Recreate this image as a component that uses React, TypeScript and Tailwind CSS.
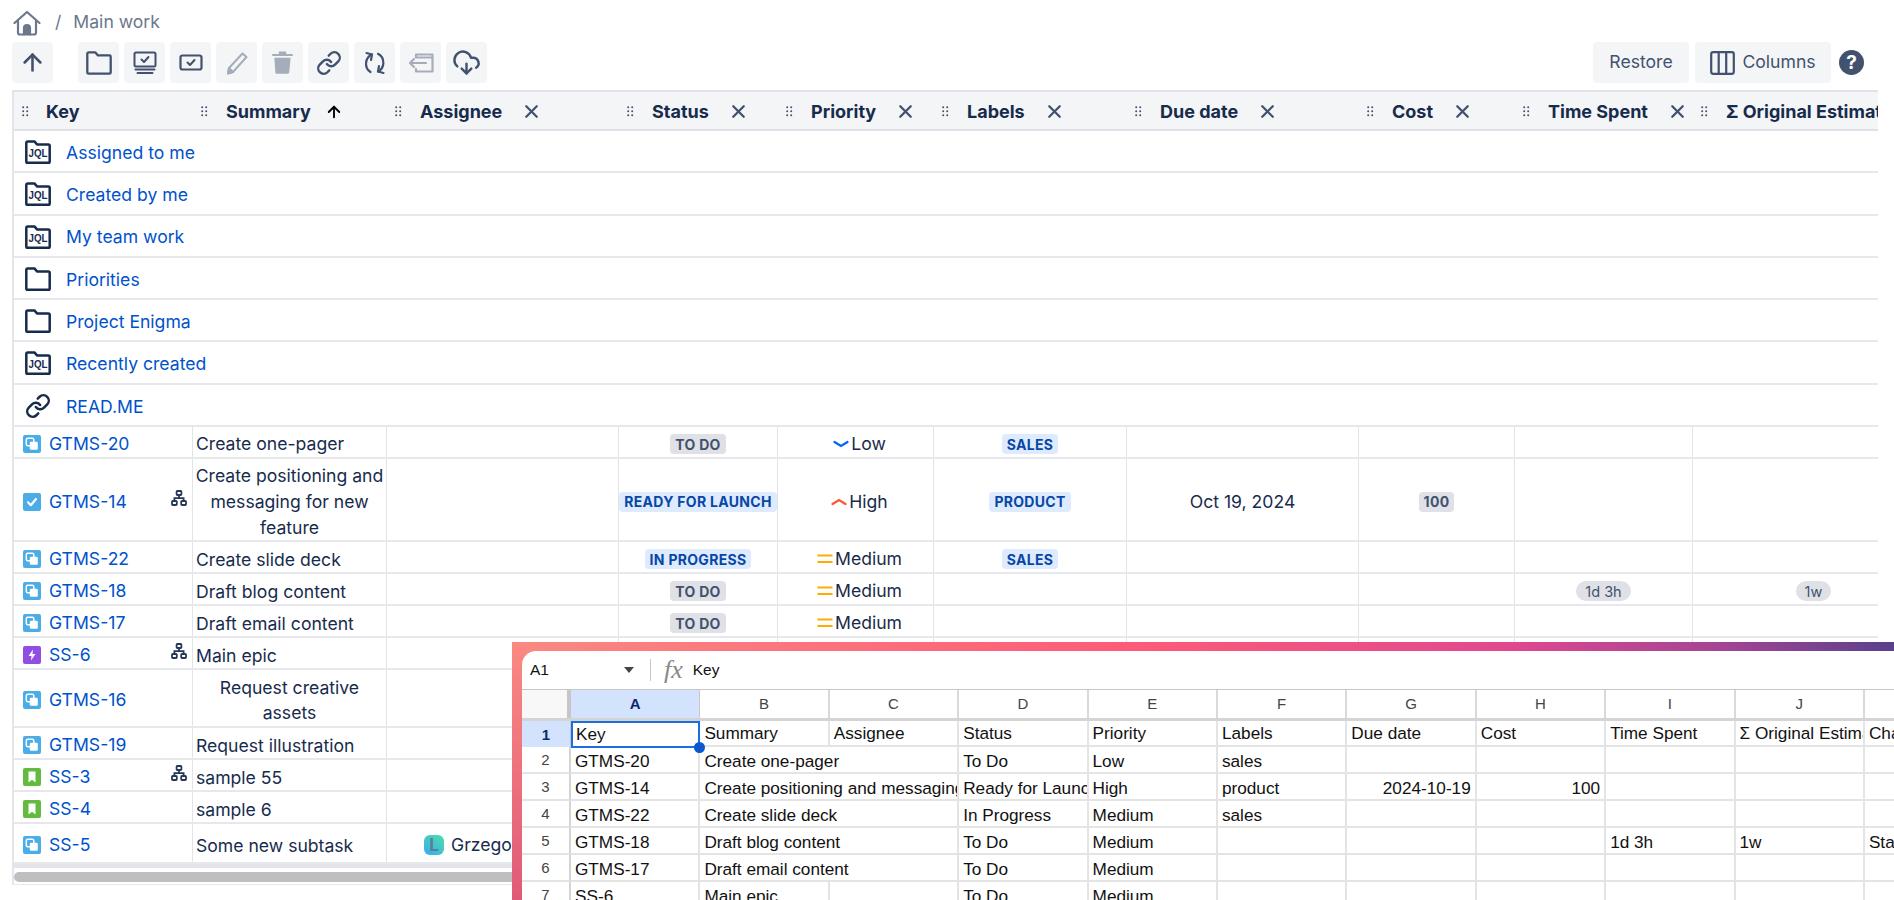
import React from "react";
import { ArrowUp, Link, CloudDownload, X } from "lucide-react";

const cols = [
  "w-[179px]", "w-[194px]", "w-[232px]", "w-[159px]", "w-[156px]",
  "w-[193px]", "w-[232px]", "w-[156px]", "w-[178px]", "w-[242px]",
];

function Btn({ children }: { children: React.ReactNode }) {
  return (
    <div className="w-[41px] h-[41px] shrink-0 rounded-[4px] bg-[#f4f5f7] flex items-center justify-center">{children}</div>
  );
}

function Handle() {
  return (
    <svg width="7" height="11" viewBox="0 0 7 11" className="shrink-0" fill="#42526e">
      <circle cx="1.2" cy="1.2" r="1" /><circle cx="5.2" cy="1.2" r="1" />
      <circle cx="1.2" cy="5.2" r="1" /><circle cx="5.2" cy="5.2" r="1" />
      <circle cx="1.2" cy="9.2" r="1" /><circle cx="5.2" cy="9.2" r="1" />
    </svg>
  );
}

function Head({ w, label, close, sort, first }: { w: string; label: string; close?: boolean; sort?: boolean; first?: boolean }) {
  return (
    <div className={`${w} shrink-0 h-full flex items-center pl-[8px] pt-[2px] whitespace-nowrap`}>
      <Handle />
      <span className={`${first ? "ml-[17px]" : "ml-[18px]"} font-bold text-[18px] text-[#172b4d]`}>{label}</span>
      {close && <X size={21} strokeWidth={2.600} className="ml-[19px] -mr-[4px] text-[#42526e] shrink-0" />}
      {sort && <ArrowUp size={18} strokeWidth={2.500} className="ml-[14px] text-black shrink-0" />}
    </div>
  );
}

const folderPath = "M1.300 21.400V2.700a1.300 1.300 0 0 1 1.300-1.300h6.800l2.600 3h11.400a1.300 1.300 0 0 1 1.300 1.300v15.700a1.300 1.300 0 0 1-1.300 1.300H2.600a1.300 1.300 0 0 1-1.300-1.300z";

function JqlIcon() {
  return (
    <svg width="26" height="24" viewBox="0 0 26 24" className="shrink-0">
      <path d={folderPath} fill="none" stroke="#172b4d" strokeWidth="2.500" strokeLinejoin="round" />
      <text x="13" y="17" textAnchor="middle" fontSize="11" fontWeight="700" fontFamily="'Liberation Sans', sans-serif" fill="#172b4d" textLength="19" lengthAdjust="spacingAndGlyphs">JQL</text>
    </svg>
  );
}
function FolderIcon() {
  return (
    <svg width="26" height="24" viewBox="0 0 26 24" className="shrink-0">
      <path d={folderPath} fill="none" stroke="#172b4d" strokeWidth="2.500" strokeLinejoin="round" />
    </svg>
  );
}

function BoxIcon({ kind }: { kind: "sub" | "task" | "epic" | "story" }) {
  const bg = { sub: "bg-[#4bade8]", task: "bg-[#4bade8]", epic: "bg-[#904ee2]", story: "bg-[#63ba3c]" }[kind];
  return (
    <div className={`w-[18px] h-[18px] rounded-[2px] ${bg} shrink-0 flex items-center justify-center`}>
      <svg width="14" height="14" viewBox="0 0 14 14">
        {kind === "sub" && (
          <>
            <rect x="1.300" y="1.300" width="7.500" height="7.500" rx="1.500" fill="none" stroke="#fff" strokeWidth="1.500" />
            <rect x="4.800" y="4.800" width="8" height="8" rx="1.300" fill="#fff" />
          </>
        )}
        {kind === "task" && <path d="M3 7.300l2.800 2.900L11 4" fill="none" stroke="#fff" strokeWidth="2.200" strokeLinecap="round" strokeLinejoin="round" />}
        {kind === "epic" && <path d="M8 1.500L3.500 8h3L6 12.500 10.500 6h-3z" fill="#fff" />}
        {kind === "story" && <path d="M3.500 1.500h7v11L7 9.800 3.500 12.500z" fill="#fff" />}
      </svg>
    </div>
  );
}

function Tree() {
  return (
    <svg width="16" height="16" viewBox="0 0 16 16" className="shrink-0 absolute right-[5px] top-1/2 -translate-y-[10px]" fill="none" stroke="#253858" strokeWidth="1.800">
      <rect x="5.600" y="1" width="4.800" height="4" rx=".8" />
      <rect x="1" y="11" width="4.800" height="4" rx=".8" />
      <rect x="10.200" y="11" width="4.800" height="4" rx=".8" />
      <path d="M8 5v3.200M3.400 11V8.200h9.200V11" />
    </svg>
  );
}

function Loz({ t, blue }: { t: string; blue?: boolean }) {
  return (
    <span className={`inline-flex items-center h-[20px] px-[5px] rounded-[4px] text-[14px] font-bold tracking-[0.3px] whitespace-nowrap ${blue ? "bg-[#deebff] text-[#0747a6]" : "bg-[#dfe1e6] text-[#42526e]"}`}>
      {t}
    </span>
  );
}

function Prio({ p }: { p: string }) {
  return (
    <div className="flex items-center justify-center pl-[8px] gap-[2px]">
      <svg width="16" height="14" viewBox="0 0 16 14" className="shrink-0">
        {p === "Low" && <path d="M1.500 5l6.500 4 6.500-4" fill="none" stroke="#0065ff" strokeWidth="2.200" strokeLinecap="round" />}
        {p === "High" && <path d="M1.500 9l6.500-4 6.500 4" fill="none" stroke="#ff5630" strokeWidth="2.200" strokeLinecap="round" />}
        {p === "Medium" && <path d="M0.500 3.500h15M0.500 10h15" fill="none" stroke="#ffab00" strokeWidth="2.200" />}
      </svg>
      <span>{p}</span>
    </div>
  );
}

type RowData = {
  h: string; kind: "sub" | "task" | "epic" | "story"; k: string; s: string; center?: boolean; tree?: boolean;
  status?: [string, boolean]; prio?: string; label?: string; due?: string; cost?: string; spent?: string; est?: string; who?: string;
};

const rows: RowData[] = [
  { h: "h-[32.300px]", kind: "sub", k: "GTMS-20", s: "Create one-pager", status: ["TO DO", false], prio: "Low", label: "SALES" },
  { h: "h-[83.300px]", kind: "task", k: "GTMS-14", s: "Create positioning and messaging for new feature", center: true, tree: true, status: ["READY FOR LAUNCH", true], prio: "High", label: "PRODUCT", due: "Oct 19, 2024", cost: "100" },
  { h: "h-[32px]", kind: "sub", k: "GTMS-22", s: "Create slide deck", status: ["IN PROGRESS", true], prio: "Medium", label: "SALES" },
  { h: "h-[32px]", kind: "sub", k: "GTMS-18", s: "Draft blog content", status: ["TO DO", false], prio: "Medium", spent: "1d 3h", est: "1w" },
  { h: "h-[32px]", kind: "sub", k: "GTMS-17", s: "Draft email content", status: ["TO DO", false], prio: "Medium" },
  { h: "h-[32px]", kind: "epic", k: "SS-6", s: "Main epic", tree: true },
  { h: "h-[58px]", kind: "sub", k: "GTMS-16", s: "Request creative assets", center: true },
  { h: "h-[32px]", kind: "sub", k: "GTMS-19", s: "Request illustration" },
  { h: "h-[32px]", kind: "story", k: "SS-3", s: "sample 55", tree: true },
  { h: "h-[32px]", kind: "story", k: "SS-4", s: "sample 6" },
  { h: "h-[40px]", kind: "sub", k: "SS-5", s: "Some new subtask", who: "Grzegorz" },
];

const folders: [string, "jql" | "folder" | "link"][] = [
  ["Assigned to me", "jql"], ["Created by me", "jql"], ["My team work", "jql"], ["Priorities", "folder"],
  ["Project Enigma", "folder"], ["Recently created", "jql"], ["READ.ME", "link"],
];

type SC = { t?: string; c: string };
const sc = (t: string, c = "") => ({ t, c });
const sheet: SC[][] = [
  [sc("GTMS-20"), sc("Create one-pager", "col-span-2"), sc("To Do"), sc("Low"), sc("sales"), sc(""), sc(""), sc(""), sc(""), sc("")],
  [sc("GTMS-14"), sc("Create positioning and messaging for new feature", "col-span-2"), sc("Ready for Launch"), sc("High"), sc("product"), sc("2024-10-19", "text-right"), sc("100", "text-right"), sc(""), sc(""), sc("")],
  [sc("GTMS-22"), sc("Create slide deck", "col-span-2"), sc("In Progress"), sc("Medium"), sc("sales"), sc(""), sc(""), sc(""), sc(""), sc("")],
  [sc("GTMS-18"), sc("Draft blog content", "col-span-2"), sc("To Do"), sc("Medium"), sc(""), sc(""), sc(""), sc("1d 3h"), sc("1w"), sc("Start")],
  [sc("GTMS-17"), sc("Draft email content", "col-span-2"), sc("To Do"), sc("Medium"), sc(""), sc(""), sc(""), sc(""), sc(""), sc("")],
  [sc("SS-6"), sc("Main epic"), sc(""), sc("To Do"), sc("Medium"), sc(""), sc(""), sc(""), sc(""), sc(""), sc("")],
];
const sheetHead = ["Summary", "Assignee", "Status", "Priority", "Labels", "Due date", "Cost", "Time Spent", "Σ Original Estimate", "Change"];
const gridCols = "grid grid-cols-[49px_repeat(11,129.400px)]";

function Sheet() {
  return (
    <div className="absolute left-[512px] top-[642px] right-0 bottom-0 pl-[10px] pt-[9px] overflow-hidden bg-[linear-gradient(180deg,rgba(224,90,120,0)_0%,rgba(224,90,120,1)_100%),linear-gradient(90deg,#fa8a82_0%,#fd5b78_45%,#e0488f_72%,#a04494_88%,#57408c_100%)]">
      <div className="h-full bg-white rounded-tl-[14px] overflow-hidden font-['Liberation_Sans',Arial,sans-serif] text-[#111]">
        <div className="h-[38px] flex items-center text-[15.500px]">
          <span className="ml-[8px] w-[94px]">A1</span>
          <svg width="10" height="6" viewBox="0 0 10 6" className="shrink-0"><path d="M0 0h10L5 6z" fill="#444" /></svg>
          <span className="ml-[16px] w-px h-[22px] bg-[#c7c7c7]" />
          <span className="ml-[13px] font-['Liberation_Serif',serif] italic text-[26px] leading-none text-[#888]">fx</span>
          <span className="ml-[10px]">Key</span>
        </div>
        <div className={`${gridCols} h-[32px] border-t border-t-[#c7c7c7] border-b-[3px] border-b-[#d4d4d4] text-[15px] text-[#444] items-stretch`}>
          <div className="bg-[#f8f8f8] border-r-[4px] border-r-[#c7c7c7]" />
          <div className="bg-[#d3e3fd] text-[#0b2a6b] font-bold flex items-center justify-center border-r border-r-[#c7c7c7]">A</div>
          {"BCDEFGHIJK".split("").map((c) => (
            <div key={c} className="flex items-center justify-center border-r-2 border-r-[#d9d9d9]">{c}</div>
          ))}
        </div>
        <div className={`${gridCols} grid-rows-[26px] h-[26px] text-[17.200px] leading-[25px]`}>
          <div className="h-[26px] bg-[#d3e3fd] text-[#0b2a6b] text-[15px] font-bold flex items-center justify-center border-r border-r-[#c7c7c7]">1</div>
          <div className="relative h-[27px] border-2 border-[#1a6fe0] pl-[3px] pr-[2px] leading-[23px]">
            Key
            <span className="absolute -right-[7px] -bottom-[7px] w-[11px] h-[11px] rounded-full bg-[#0b57d0] z-10" />
          </div>
          {sheetHead.map((t) => (
            <div key={t} className="h-[26px] border-r-2 border-r-[#e4e4e4] border-b-2 border-b-[#e4e4e4] pl-[4px] overflow-hidden whitespace-nowrap">{t}</div>
          ))}
        </div>
        {sheet.map((r, i) => (
          <div key={i} className={`${gridCols} grid-rows-[27px] h-[27px] text-[17.200px] leading-[28px]`}>
            <div className="h-[27px] text-[#444] text-[15px] flex items-center justify-center border-r-2 border-r-[#d4d4d4] border-b-2 border-b-[#e4e4e4]">{i + 2}</div>
            {r.map((c, j) => (
              <div key={j} className={`h-[27px] border-r-2 border-r-[#e4e4e4] border-b-2 border-b-[#e4e4e4] px-[4px] overflow-hidden whitespace-nowrap ${c.c}`}>{c.t}</div>
            ))}
          </div>
        ))}
      </div>
    </div>
  );
}

export default function App() {
  const cell = "shrink-0 h-full pt-[4px] border-r border-r-[#e1e3e8] flex items-center justify-center";
  return (
    <div className="relative w-[1894px] h-[900px] overflow-hidden bg-white font-['Inter','Liberation_Sans',sans-serif] text-[17.600px] text-[#172b4d]">
      <div className="h-[42px] pl-[13px] flex items-center pt-[3px]">
        <svg width="28" height="26" viewBox="0 0 28 26" fill="none" stroke="#6b778c" strokeWidth="2.200" strokeLinecap="round" strokeLinejoin="round">
          <path d="M1.500 13L14 2l12.500 11" />
          <path d="M5 10.500V22.500a2 2 0 0 0 2 2h14a2 2 0 0 0 2-2V10.500" />
          <path d="M11 24.500V18a3 3 0 0 1 6 0v6.500" fill="#6b778c" />
        </svg>
        <span className="ml-[14px] text-[#6b778c]">/</span>
        <span className="ml-[12px] text-[#6b778c]">Main work</span>
      </div>

      <div className="h-[41px] pl-[12px] pr-[30px] flex items-center gap-[5px]">
        <Btn><ArrowUp size={27} strokeWidth={2.300} className="text-[#42526e]" /></Btn>
        <div className="w-[15px]" />
        <Btn><svg width="26" height="24" viewBox="0 0 26 24"><path d={folderPath} fill="none" stroke="#42526e" strokeWidth="2.300" strokeLinejoin="round" /></svg></Btn>
        <Btn>
          <svg width="24" height="24" viewBox="0 0 24 24" fill="none" stroke="#42526e" strokeWidth="2" strokeLinecap="round" strokeLinejoin="round">
            <rect x="1.500" y="1.500" width="21" height="14" rx="1.500" />
            <path d="M8.500 8.500l2.500 2.500 4.500-5" />
            <path d="M2.500 18.500h19M4.500 22h15" />
          </svg>
        </Btn>
        <Btn>
          <svg width="24" height="18" viewBox="0 0 24 18" fill="none" stroke="#42526e" strokeWidth="2.200" strokeLinecap="round" strokeLinejoin="round">
            <rect x="1.500" y="1.500" width="21" height="14" rx="2" />
            <path d="M8.500 8.500l2.500 2.500 4.500-5" strokeWidth="2" />
          </svg>
        </Btn>
        <Btn>
          <svg width="24" height="24" viewBox="0 0 24 24" fill="none" stroke="#a5adba" strokeWidth="2" strokeLinejoin="round">
            <path d="M17.500 2.500l4 3.500L8 21l-5 1.500 1-5.500z" />
            <path d="M3 22.500l1-5.500 4 4z" fill="#a5adba" />
          </svg>
        </Btn>
        <Btn>
          <svg width="21" height="23" viewBox="0 0 22 24" fill="#a5adba">
            <rect x="0" y="3" width="22" height="2.200" rx="1" />
            <rect x="7" y="0.500" width="8" height="2.500" rx="1" />
            <path d="M2.500 7h17l-1.500 15.500a1.500 1.500 0 0 1-1.500 1.300h-11.500a1.500 1.500 0 0 1-1.500-1.300z" />
          </svg>
        </Btn>
        <Btn><Link size={26} strokeWidth={2.200} className="text-[#42526e]" /></Btn>
        <Btn>
          <svg width="24" height="24" viewBox="0 0 24 24" fill="none" stroke="#42526e" strokeWidth="2.200" strokeLinecap="round" strokeLinejoin="round">
            <path d="M9 3.500A10 10 0 0 0 7.500 21" />
            <path d="M3.500 2L9 3.500 8 9" />
            <path d="M15 2.800A10 10 0 0 1 15 20.500" />
            <path d="M20.500 22L15 20.500l1-5.500" />
          </svg>
        </Btn>
        <Btn>
          <svg width="26" height="20" viewBox="0 0 26 20" fill="none" stroke="#a5adba" strokeWidth="2.200" strokeLinecap="round" strokeLinejoin="round">
            <path d="M8 4V1.500h16.500v17H8V16" />
            <path d="M8 4.500h16" strokeWidth="1.800" />
            <path d="M18 10H2M6 6l-4 4 4 4" />
          </svg>
        </Btn>
        <Btn><CloudDownload size={29} strokeWidth={2} className="text-[#42526e]" /></Btn>
        <div className="flex-1" />
        <div className="h-[41px] w-[96px] rounded-[4px] bg-[#f4f5f7] text-[#42526e] flex items-center justify-center">Restore</div>
        <div className="ml-[1px] h-[41px] w-[136px] rounded-[4px] bg-[#f4f5f7] text-[#42526e] flex items-center justify-center gap-[7px]">
          <svg width="25" height="24" viewBox="0 0 25 24" fill="none" stroke="#42526e" strokeWidth="2.200"><rect x="1.200" y="1.200" width="22.600" height="21.600" rx="2" /><path d="M8.700 1v22M16.200 1v22" /></svg>
          Columns
        </div>
        <div className="ml-[3px] w-[25px] h-[25px] rounded-full bg-[#42526e] text-white font-bold text-[19px] leading-none flex items-center justify-center">?</div>
      </div>

      <div className="mt-[7px] ml-[12px] w-[1866px] overflow-hidden border-l-2 border-l-[#e4e5ea]">
        <div className="h-[41px] bg-[#f4f5f7] border-t-2 border-t-[#e1e3e8] border-b-2 border-b-[#dfe1e6] flex">
          <Head w={cols[0]} label="Key" first />
          <Head w={cols[1]} label="Summary" sort />
          <Head w={cols[2]} label="Assignee" close />
          <Head w={cols[3]} label="Status" close />
          <Head w={cols[4]} label="Priority" close />
          <Head w={cols[5]} label="Labels" close />
          <Head w={cols[6]} label="Due date" close />
          <Head w={cols[7]} label="Cost" close />
          <Head w={cols[8]} label="Time Spent" close />
          <Head w={cols[9]} label="Σ Original Estimate" />
        </div>
        {folders.map(([t, ic]) => (
          <div key={t} className="h-[42.270px] pl-[11px] pt-[2px] flex items-center gap-[15px] border-b-2 border-b-[#e7e8ec]">
            {ic === "jql" && <JqlIcon />}
            {ic === "folder" && <FolderIcon />}
            {ic === "link" && <Link size={26} strokeWidth={2.300} className="text-[#172b4d] shrink-0" />}
            <span className="text-[#0052cc] pt-[2px]">{t}</span>
          </div>
        ))}
        {rows.map((r) => (
          <div key={r.k} className={`${r.h} flex border-b-2 border-b-[#e7e8ec]`}>
            <div className={`${cols[0]} relative shrink-0 h-full pt-[4px] border-r border-r-[#e1e3e8] flex items-center pl-[9px] gap-[8px]`}>
              <BoxIcon kind={r.kind} />
              <span className="text-[#0052cc]">{r.k}</span>
              {r.tree && <Tree />}
            </div>
            <div className={`${cols[1]} shrink-0 h-full pt-[4px] border-r border-r-[#e1e3e8] flex items-center leading-[25.700px] ${r.center ? "text-center" : "pl-[3px]"}`}>
              <span className="w-full">{r.s}</span>
            </div>
            <div className={`${cols[2]} shrink-0 h-full pt-[4px] border-r border-r-[#e1e3e8] flex items-center pl-[37px] gap-[7px] whitespace-nowrap overflow-hidden`}>
              {r.who && (
                <>
                  <span className="w-[20px] h-[20px] rounded-[6px] bg-[linear-gradient(215deg,#4be0a8,#3ba8f0)] flex items-center justify-center text-[#5a7d9a] font-bold text-[17px] leading-none">L</span>
                  {r.who}
                </>
              )}
            </div>
            <div className={`${cols[3]} ${cell}`}>{r.status && <Loz t={r.status[0]} blue={r.status[1]} />}</div>
            <div className={`${cols[4]} ${cell}`}>{r.prio && <Prio p={r.prio} />}</div>
            <div className={`${cols[5]} ${cell}`}>{r.label && <Loz t={r.label} blue />}</div>
            <div className={`${cols[6]} ${cell}`}>{r.due}</div>
            <div className={`${cols[7]} ${cell}`}>{r.cost && <Loz t={r.cost} />}</div>
            <div className={`${cols[8]} ${cell}`}>
              {r.spent && <span className="px-[9px] h-[20px] rounded-full bg-[#dfe1e6] text-[#42526e] text-[14.500px] flex items-center">{r.spent}</span>}
            </div>
            <div className={`${cols[9]} ${cell}`}>
              {r.est && <span className="px-[9px] h-[20px] rounded-full bg-[#dfe1e6] text-[#42526e] text-[14.500px] flex items-center">{r.est}</span>}
            </div>
          </div>
        ))}
        <div className="h-[21px] bg-white border-t-[4px] border-t-[#e4e5ea] pt-[4px] border-b border-b-[#e9e9ec]">
          <div className="w-[1200px] h-[10px] rounded-full bg-[#bfbfbf]" />
        </div>
      </div>

      <Sheet />
    </div>
  );
}
